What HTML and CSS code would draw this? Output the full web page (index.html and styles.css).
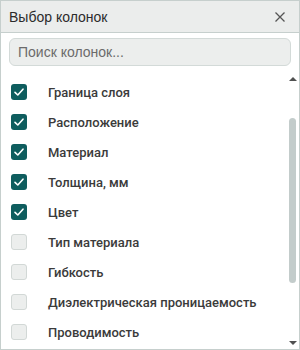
FILE: index.html
```html
<!DOCTYPE html>
<html>
<head>
    <title>Выбор колонок</title>
    <link rel="stylesheet" href="styles.css">
    <meta name="viewport" content="width=device-width, initial-scale=1.0">
</head>
<body>
    <div class="panel">
        <div class="panel-header">
            <span class="panel-title">Выбор колонок</span>
            <button class="close-btn" title="Закрыть">
                <svg width="12" height="12" viewBox="0 0 12 12"><path d="M1.5 1.5 L10.5 10.5 M10.5 1.5 L1.5 10.5" stroke="#555" stroke-width="1.3" fill="none"/></svg>
            </button>
        </div>
        <div class="search-wrap">
            <input type="text" class="search-input" placeholder="Поиск колонок...">
        </div>
        <div class="panel-body">
            <div class="col-list">
                <label class="col-row"><span class="cb checked"><svg width="16" height="16" viewBox="0 0 16 16"><path d="M4 8.3 L6.8 11 L12 5.2" stroke="#fff" stroke-width="1.6" fill="none" stroke-linecap="round" stroke-linejoin="round"/></svg></span>Граница слоя</label>
                <label class="col-row"><span class="cb checked"><svg width="16" height="16" viewBox="0 0 16 16"><path d="M4 8.3 L6.8 11 L12 5.2" stroke="#fff" stroke-width="1.6" fill="none" stroke-linecap="round" stroke-linejoin="round"/></svg></span>Расположение</label>
                <label class="col-row"><span class="cb checked"><svg width="16" height="16" viewBox="0 0 16 16"><path d="M4 8.3 L6.8 11 L12 5.2" stroke="#fff" stroke-width="1.6" fill="none" stroke-linecap="round" stroke-linejoin="round"/></svg></span>Материал</label>
                <label class="col-row"><span class="cb checked"><svg width="16" height="16" viewBox="0 0 16 16"><path d="M4 8.3 L6.8 11 L12 5.2" stroke="#fff" stroke-width="1.6" fill="none" stroke-linecap="round" stroke-linejoin="round"/></svg></span>Толщина, мм</label>
                <label class="col-row"><span class="cb checked"><svg width="16" height="16" viewBox="0 0 16 16"><path d="M4 8.3 L6.8 11 L12 5.2" stroke="#fff" stroke-width="1.6" fill="none" stroke-linecap="round" stroke-linejoin="round"/></svg></span>Цвет</label>
                <label class="col-row"><span class="cb"></span>Тип материала</label>
                <label class="col-row"><span class="cb"></span>Гибкость</label>
                <label class="col-row"><span class="cb"></span>Диэлектрическая проницаемость</label>
                <label class="col-row"><span class="cb"></span>Проводимость</label>
            </div>
            <!-- scrollbar drawn by hand, list is shown scrolled a bit -->
            <div class="scrollbar">
                <span class="arrow-up"></span>
                <div class="track"><div class="thumb"></div></div>
                <span class="arrow-down"></span>
            </div>
        </div>
    </div>
</body>
</html>
```
FILE: styles.css
```css
html {
    font-family: "Liberation Sans", Arial, sans-serif;
}
body {
    margin: 0;
    background: #fff;
}

.panel {
    width: 300px;
    height: 350px;
    box-sizing: border-box;
    border: 1px solid #c6cfcd;
    display: flex;
    flex-direction: column;
    overflow: hidden;
}

.panel-header {
    height: 31px;
    background: #ebedec;
    border-bottom: 1px solid #c6cfcd;
    display: flex;
    align-items: center;
    justify-content: space-between;
    padding: 0 13px 0 8px;
    flex-shrink: 0;
}
.panel-title {
    font-size: 14px;
    color: #2b2b2b;
}
.close-btn {
    border: none;
    background: none;
    padding: 0;
    width: 12px;
    height: 12px;
    display: flex;
}

.search-wrap {
    padding: 5px 8px 6px 8px;
    flex-shrink: 0;
}
.search-input {
    width: 100%;
    height: 28px;
    box-sizing: border-box;
    border: 1px solid #d3dad8;
    border-radius: 6px;
    background: #eceeed;
    padding: 0 8px;
    font-family: "Liberation Sans", Arial, sans-serif;
    font-size: 14px;
    color: #333;
}
.search-input::placeholder {
    color: #6b6b6b;
}

.panel-body {
    flex: 1;
    display: flex;
    min-height: 0;
}
.col-list {
    flex: 1;
    padding-top: 5px;
    overflow: hidden;
}
.col-row {
    height: 30px;
    display: flex;
    align-items: center;
    padding-left: 10px;
    font-family: Roboto, sans-serif;
    font-size: 13px;
    font-weight: 500;
    color: #3b3b3b;
    white-space: nowrap;
}
.cb {
    width: 16px;
    height: 16px;
    box-sizing: border-box;
    border-radius: 3px;
    border: 1px solid #d2d8d6;
    background: #eceeed;
    margin-right: 21px;
    display: flex;
    flex-shrink: 0;
}
.cb.checked {
    border: none;
    background: #0e5d5e;
}

.scrollbar {
    width: 11px;
    margin-right: 1px;
    display: flex;
    flex-direction: column;
    align-items: center;
}
.arrow-up, .arrow-down {
    width: 0;
    height: 0;
    border-left: 4px solid transparent;
    border-right: 4px solid transparent;
}
.arrow-up {
    border-bottom: 4px solid #505050;
    margin-top: 5px;
}
.arrow-down {
    border-top: 4px solid #505050;
    margin-bottom: 4px;
}
.track {
    flex: 1;
    width: 7px;
}
.thumb {
    margin-top: 37px;
    height: 165px;
    border-radius: 4px;
    background: #c3cccb;
}
```
